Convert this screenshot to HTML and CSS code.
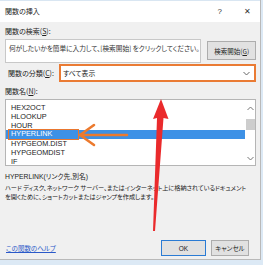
FILE: index.html
```html
<!DOCTYPE html>
<html lang="ja">
<head>
<meta charset="utf-8">
<link rel="stylesheet" href="styles.css">
</head>
<body>
<div class="dialog">
  <div class="titlebar">
    <span class="title">関数の挿入</span>
    <span class="tb-btns"><span class="help">?</span><span class="close">✕</span></span>
  </div>
  <div class="content">
    <div class="label l-search">関数の検索(<u>S</u>):</div>
    <div class="search-row">
      <div class="search-box">何がしたいかを簡単に入力して、[検索開始] をクリックしてください。</div>
      <div class="btn btn-search">検索開始(<u>G</u>)</div>
    </div>
    <div class="cat-row">
      <span class="label">関数の分類(<u>C</u>):</span>
      <div class="select"><span>すべて表示</span>
        <svg class="caret" width="7" height="5" viewBox="0 0 7 5"><path d="M0.5 1 L3.5 4 L6.5 1" fill="none" stroke="#666" stroke-width="1"/></svg>
      </div>
    </div>
    <div class="label l-name">関数名(<u>N</u>):</div>
    <div class="listbox">
      <ul class="items">
        <li>HEX2OCT</li>
        <li>HLOOKUP</li>
        <li>HOUR</li>
        <li class="sel"><span class="mark">HYPERLINK</span></li>
        <li>HYPGEOM.DIST</li>
        <li>HYPGEOMDIST</li>
        <li>IF</li>
      </ul>
      <div class="scroll">
        <svg width="7" height="5" viewBox="0 0 7 5"><path d="M0.5 4 L3.5 1 L6.5 4" fill="none" stroke="#777" stroke-width="1"/></svg>
        <div class="thumb"></div>
        <svg width="7" height="5" viewBox="0 0 7 5"><path d="M0.5 1 L3.5 4 L6.5 1" fill="none" stroke="#777" stroke-width="1"/></svg>
      </div>
    </div>
    <div class="sig">HYPERLINK(リンク先,別名)</div>
    <div class="desc">ハード ディスク、ネットワーク サーバー、またはインターネット上に格納されているドキュメント<br>を開くために、ショートカットまたはジャンプを作成します。</div>
    <div class="footer">
      <a class="helplink">この関数のヘルプ</a>
      <div class="btns">
        <div class="btn btn-ok">OK</div>
        <div class="btn btn-cancel">キャンセル</div>
      </div>
    </div>
  </div>
  <svg class="overlay" width="263" height="265" viewBox="0 0 263 265">
    <path d="M80 135 L94 125 M80 135 L94 145 M81 135 L127 135" fill="none" stroke="#ec7a2e" stroke-width="2.6" stroke-linecap="round"/>
    <polygon points="161,99 168.5,119 163.5,118 155,231 153,231 157,118 153,119" fill="#ea2a2c"/>
  </svg>
</div>
</body>
</html>
```

FILE: styles.css
```css
* { box-sizing: border-box; }
html, body { margin: 0; padding: 0; }
body {
  width: 263px; height: 265px;
  background: #dce9f5;
  font-family: "Noto Sans CJK JP", "Liberation Sans", sans-serif;
  font-feature-settings: "palt";
  color: #222;
  overflow: hidden;
}
.dialog {
  position: relative;
  width: 261px; height: 260px;
  background: #f0f0f0;
  border-right: 1px solid #b9b9b9;
  border-bottom: 1px solid #b9b9b9;
  display: flex; flex-direction: column;
}
.titlebar {
  height: 22px; background: #fff;
  display: flex; align-items: center; justify-content: space-between;
  padding: 0 9px 0 5px;
  border-top: 1px solid #d9e6f2;
}
.title { font-size: 7px; line-height: 1; }
.tb-btns { display: flex; gap: 22px; font-family: "Liberation Sans", sans-serif; font-size: 8px; color: #333; }
.close { font-size: 8px; }
.content { flex: 1; padding: 0 4px 0 5px; display: flex; flex-direction: column; }
.label { font-size: 7px; line-height: 9px; white-space: nowrap; }
u { text-decoration: underline; text-underline-offset: 1px; }
.l-search { margin-top: 5px; }
.search-row { display: flex; align-items: flex-start; gap: 6px; margin-top: 3px; }
.search-box {
  width: 198px; height: 24px; background: #fff; border: 1px solid #c8c8c8;
  font-size: 6.7px; line-height: 1; padding: 5px 0 0 3px; white-space: nowrap; overflow: hidden;
  letter-spacing: -0.05px; color: #333;
}
.btn {
  background: #e1e1e1; border: 1px solid #adadad;
  font-size: 6.5px; display: flex; align-items: center; justify-content: center;
  white-space: nowrap;
}
.btn-search { width: 49px; height: 19px; margin-top: 2px; }
.cat-row { display: flex; align-items: center; margin-top: 1px; padding-left: 3px; }
.cat-row .label { width: 51px; }
.select {
  flex: 1; height: 18px; background: #fff; border: 2px solid #ea7b34;
  display: flex; align-items: center; justify-content: space-between;
  padding: 0 4px 0 2px; font-size: 6.8px;
}
.caret { display: block; }
.l-name { margin-top: 5px; }
.listbox {
  margin-top: 3px; height: 67px; background: #fff; border: 1px solid #b5b5b5;
  display: flex;
}
.items {
  list-style: none; margin: 0; padding: 3px 0 0 0; flex: 1;
  font-family: "Liberation Sans", sans-serif; font-size: 7.3px;
}
.items li { height: 9px; line-height: 9px; padding-left: 5px; color: #222; }
.items li.sel { background: #3d91e6; color: #fff; padding-left: 2px; }
.mark {
  display: inline-block; border: 1.5px solid #e9772f; padding: 0 1px 0 2px;
  height: 11px; line-height: 8px; margin-top: -1px; width: 71px; vertical-align: top;
}
.scroll {
  width: 10px; display: flex; flex-direction: column; align-items: center;
  justify-content: space-between; padding: 6px 0 4px; background: #fff;
}
.thumb { width: 9px; height: 11px; background: #cdcdcd; margin-top: 8px; margin-bottom: auto; }
.sig { font-family: "Liberation Sans", "Noto Sans CJK JP", sans-serif; font-size: 6.8px; margin-top: 6px; line-height: 9px; }
.desc { font-size: 6.2px; line-height: 8.5px; margin-top: 3px; white-space: nowrap; letter-spacing: -0.05px; }
.footer { margin-top: auto; margin-bottom: 3px; display: flex; align-items: center; justify-content: space-between; }
.helplink { font-size: 6.5px; color: #2a59c9; text-decoration: underline; padding-left: 1px; }
.btns { display: flex; gap: 5px; padding-right: 7px; }
.btn-ok { width: 45px; height: 16px; border: 1px solid #2a7bd4; font-family: "Liberation Sans", sans-serif; }
.btn-cancel { width: 38px; height: 16px; }
.overlay { position: absolute; left: 0; top: 0; pointer-events: none; }
```
